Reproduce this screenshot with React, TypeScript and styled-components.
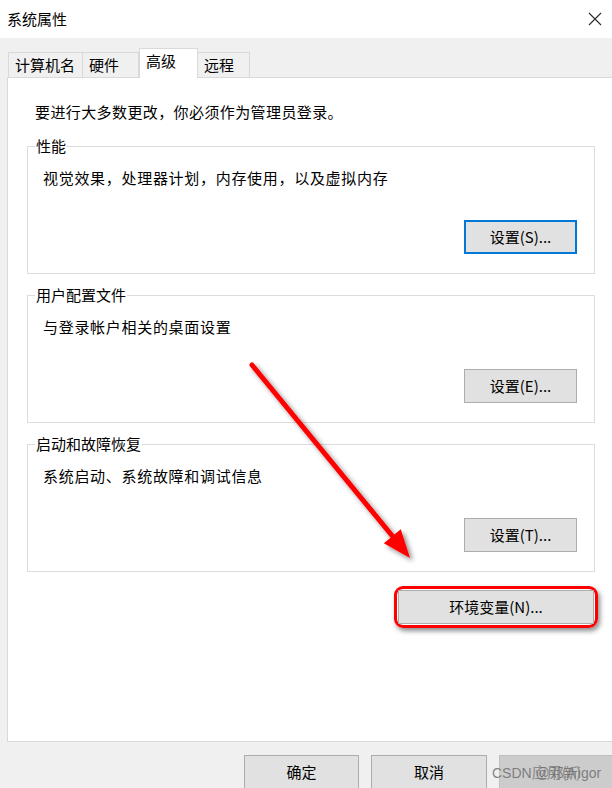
import React from "react";
import styled, { createGlobalStyle } from "styled-components";

const Global = createGlobalStyle`
  html, body { margin: 0; padding: 0; background: #ffffff; }
  body { font-family: "Noto Sans CJK SC", "Noto Sans", sans-serif; color: #000; }
  * { box-sizing: border-box; }
`;

const Window = styled.div`
  position: relative;
  width: 612px;
  height: 788px;
  overflow: hidden;
  background: #f0f0f0;
  display: flex;
  flex-direction: column;
`;

const TitleBar = styled.div`
  height: 38px;
  flex: none;
  background: #ffffff;
  display: flex;
  align-items: center;
  justify-content: space-between;
  padding: 0 10px 0 7px;
  font-size: 15px;
  line-height: 20px;
`;

const CloseBtn = styled.div`
  width: 14px;
  height: 14px;
  display: flex;
  align-items: center;
  justify-content: center;
`;

const TabRow = styled.div`
  display: flex;
  align-items: flex-end;
  padding-left: 8px;
  margin-top: 11px;
  height: 29px;
  position: relative;
  z-index: 1;
  margin-bottom: -1px;
`;

const Tab = styled.div<{ $active?: boolean; $w: number }>`
  width: ${(p) => p.$w}px;
  height: ${(p) => (p.$active ? 30 : 26)}px;
  background: ${(p) => (p.$active ? "#ffffff" : "#f0f0f0")};
  border: 1px solid #d9d9d9;
  border-bottom: ${(p) => (p.$active ? "none" : "1px solid #d9d9d9")};
  margin-left: ${(p) => (p.$active ? "0" : "-1px")};
  display: flex;
  align-items: ${(p) => (p.$active ? "flex-start" : "center")};
  padding-top: ${(p) => (p.$active ? "2px" : "0")};
  padding-left: 6px;
  font-size: 15px;
  line-height: 20px;
  &:first-child { margin-left: 0; }
`;

const Panel = styled.div`
  margin-left: 7px;
  margin-right: -4px;
  height: 665px;
  flex: none;
  background: #ffffff;
  border: 1px solid #d9d9d9;
  padding: 24px 0 0 19px;
  display: flex;
  flex-direction: column;
`;

const Intro = styled.div`
  font-size: 15px;
  line-height: 20px;
  padding-left: 8px;
  margin-bottom: 14px;
  letter-spacing: 0.4px;
`;

const Group = styled.fieldset`
  width: 568px;
  margin: 0 0 11px 0;
  border: 1px solid #dcdcdc;
  padding: 0 17px 19px 15px;
  min-width: 0;
`;

const Legend = styled.legend`
  font-size: 15px;
  line-height: 20px;
  padding: 0 1px;
  margin-left: -8px;
`;

const Desc = styled.div`
  font-size: 15px;
  line-height: 20px;
  margin-top: 12px;
  letter-spacing: 0.7px;
`;

const ButtonRow = styled.div`
  display: flex;
  justify-content: flex-end;
  margin-top: 32px;
`;

const Button = styled.div<{ $focused?: boolean; $w?: number; $disabled?: boolean }>`
  width: ${(p) => p.$w ?? 113}px;
  height: 34px;
  background: ${(p) => (p.$disabled ? "#cccccc" : "#e1e1e1")};
  border: ${(p) =>
    p.$focused ? "2px solid #0078d7" : p.$disabled ? "1px solid #bfbfbf" : "1px solid #adadad"};
  display: flex;
  align-items: center;
  justify-content: center;
  font-size: 15px;
  line-height: 20px;
  color: ${(p) => (p.$disabled ? "#8a8a8a" : "#000")};
  position: relative;
`;

const EnvRow = styled.div`
  width: 568px;
  display: flex;
  justify-content: flex-end;
  margin-top: 3px;
`;

const Highlight = styled.div`
  margin-right: -3px;
  border: 3.5px solid #ff0000;
  border-radius: 9px;
  padding: 1px;
  box-shadow: 2px 3px 5px rgba(0, 0, 0, 0.45);
  display: flex;
`;

const Footer = styled.div`
  display: flex;
  justify-content: flex-end;
  gap: 12px;
  margin-top: 13px;
  margin-right: -2px;
`;

const Watermark = styled.span`
  position: absolute;
  left: -8px;
  top: 7px;
  font-family: "Liberation Sans", "Noto Sans CJK SC", sans-serif;
  font-size: 14px;
  color: rgba(110, 110, 110, 0.85);
  white-space: nowrap;
`;

const ArrowLayer = styled.svg`
  position: absolute;
  left: 0;
  top: 0;
  pointer-events: none;
`;

export default function App() {
  return (
    <>
      <Global />
      <Window>
        <TitleBar>
          <span>系统属性</span>
          <CloseBtn>
            <svg width="14" height="14" viewBox="0 0 14 14">
              <path d="M1 1 L13 13 M13 1 L1 13" stroke="#2b2b2b" strokeWidth="1.1" />
            </svg>
          </CloseBtn>
        </TitleBar>
        <TabRow>
          <Tab $w={75}>计算机名</Tab>
          <Tab $w={57}>硬件</Tab>
          <Tab $w={59} $active>高级</Tab>
          <Tab $w={53}>远程</Tab>
        </TabRow>
        <Panel>
          <Intro>要进行大多数更改，你必须作为管理员登录。</Intro>
          <Group>
            <Legend>性能</Legend>
            <Desc>视觉效果，处理器计划，内存使用，以及虚拟内存</Desc>
            <ButtonRow>
              <Button $focused>设置(S)...</Button>
            </ButtonRow>
          </Group>
          <Group>
            <Legend>用户配置文件</Legend>
            <Desc>与登录帐户相关的桌面设置</Desc>
            <ButtonRow>
              <Button>设置(E)...</Button>
            </ButtonRow>
          </Group>
          <Group>
            <Legend>启动和故障恢复</Legend>
            <Desc>系统启动、系统故障和调试信息</Desc>
            <ButtonRow>
              <Button>设置(T)...</Button>
            </ButtonRow>
          </Group>
          <EnvRow>
            <Highlight>
              <Button $w={196}>环境变量(N)...</Button>
            </Highlight>
          </EnvRow>
        </Panel>
        <Footer>
          <Button $w={115}>确定</Button>
          <Button $w={116}>取消</Button>
          <Button $w={115} $disabled>
            应用(A)
            <Watermark>CSDN @邓新igor</Watermark>
          </Button>
        </Footer>
        <ArrowLayer width="612" height="788" viewBox="0 0 612 788">
          <defs>
            <filter id="sh" x="-20%" y="-20%" width="140%" height="140%">
              <feDropShadow dx="3" dy="3" stdDeviation="2.5" floodColor="#000" floodOpacity="0.45" />
            </filter>
          </defs>
          <g filter="url(#sh)">
            <line x1="252" y1="365" x2="394" y2="538" stroke="#ff0000" strokeWidth="5" strokeLinecap="round" />
            <polygon points="410,558 383.8,543.3 400.8,529.3" fill="#ff0000" />
          </g>
        </ArrowLayer>
      </Window>
    </>
  );
}
